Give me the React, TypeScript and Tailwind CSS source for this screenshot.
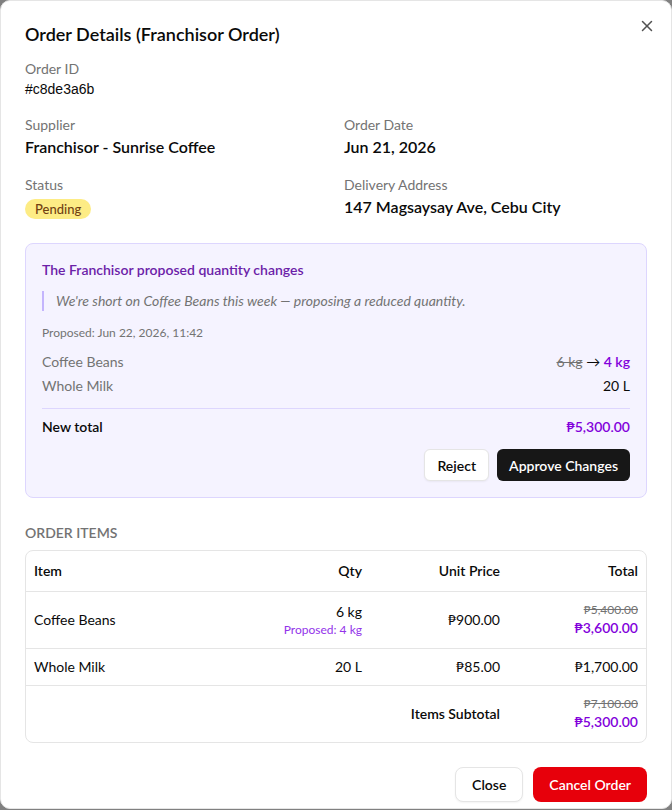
import React from "react";
import { X } from "lucide-react";

const font = { fontFamily: "Lato, 'Noto Sans', sans-serif" };

const Field = ({ label, children }: { label: string; children: React.ReactNode }) => (
  <div className="flex flex-col">
    <div className="text-[14px] leading-5 text-[#737373]">{label}</div>
    {children}
  </div>
);

const cols = "grid grid-cols-[1fr_120px_138px_138px] items-center px-2";

export default function App() {
  return (
    <div className="h-[810px] bg-[#808080]" style={font}>
      <div className="relative h-[809px] rounded-[10px] border border-[#e5e5e5] bg-white px-6 pt-[22px] text-[#0a0a0a]">
        <button className="absolute right-[15px] top-[16px] text-[#525252]">
          <X size={18} strokeWidth={2} />
        </button>
        <h2 className="text-[18px] font-semibold leading-[22px]">Order Details (Franchisor Order)</h2>

        <div className="mt-[14px] flex flex-col">
          <div className="text-[14px] leading-5 text-[#737373]">Order ID</div>
          <div className="text-[14px] leading-5" style={{ fontFamily: "'Liberation Sans', sans-serif" }}>
            #c8de3a6b
          </div>
        </div>

        <div className="mt-[16px] grid grid-cols-2 gap-x-4 gap-y-[16px]">
          <Field label="Supplier">
            <div className="text-[16px] font-semibold leading-6">Franchisor - Sunrise Coffee</div>
          </Field>
          <Field label="Order Date">
            <div className="text-[16px] font-semibold leading-6">Jun 21, 2026</div>
          </Field>
          <Field label="Status">
            <div className="flex pt-[4px]">
              <span className="rounded-full bg-[#fdec85] px-[10px] py-[2px] text-[13px] leading-4 font-medium text-[#713f12]">
                Pending
              </span>
            </div>
          </Field>
          <Field label="Delivery Address">
            <div className="text-[16px] font-semibold leading-6">147 Magsaysay Ave, Cebu City</div>
          </Field>
        </div>

        <div className="mt-[24px] rounded-lg border border-[#ddd6fe] bg-[#f5f3ff] px-4 pt-[16px] pb-[16px]">
          <div className="text-[14px] font-semibold leading-5 text-[#6b21a8]">
            The Franchisor proposed quantity changes
          </div>
          <div className="mt-[11px] border-l-2 border-[#c4b5fd] pl-3 text-[14px] italic leading-5 text-[#737373]">
            We're short on Coffee Beans this week — proposing a reduced quantity.
          </div>
          <div className="mt-[14px] text-[12px] leading-4 text-[#737373]">Proposed: Jun 22, 2026, 11:42</div>
          <div className="mt-[11px] flex flex-col gap-1 text-[14px] leading-5">
            <div className="flex justify-between">
              <span className="text-[#737373]">Coffee Beans</span>
              <span>
                <span className="text-[#737373] line-through">6 kg</span>
                <span className="text-[#0a0a0a]"> → </span>
                <span className="font-semibold text-[#8200db]">4 kg</span>
              </span>
            </div>
            <div className="flex justify-between">
              <span className="text-[#737373]">Whole Milk</span>
              <span>20 L</span>
            </div>
          </div>
          <div className="mt-[12px] flex justify-between border-t border-[#ddd6fe] pt-[8px] text-[14px] leading-5">
            <span className="font-semibold">New total</span>
            <span className="font-semibold text-[#8200db]">₱5,300.00</span>
          </div>
          <div className="mt-[12px] flex justify-end gap-2">
            <button className="h-8 rounded-md border border-[#e5e5e5] bg-white px-3 text-[14px] font-semibold shadow-xs">
              Reject
            </button>
            <button className="h-8 rounded-md bg-[#171717] px-3 text-[14px] font-semibold text-white">
              Approve Changes
            </button>
          </div>
        </div>

        <div className="mt-[25px] text-[14px] font-semibold uppercase leading-5 text-[#737373]">Order Items</div>

        <div className="mt-[7px] overflow-hidden rounded-lg border border-[#e5e5e5] text-[14px] leading-5">
          <div className={`${cols} h-[41px] border-b border-[#e5e5e5] font-semibold`}>
            <div>Item</div>
            <div className="text-right">Qty</div>
            <div className="text-right">Unit Price</div>
            <div className="text-right">Total</div>
          </div>
          <div className={`${cols} h-[57px] border-b border-[#e5e5e5]`}>
            <div>Coffee Beans</div>
            <div className="text-right">
              <div>6 kg</div>
              <div className="text-[12px] leading-4 text-[#9333ea]">Proposed: 4 kg</div>
            </div>
            <div className="text-right">₱900.00</div>
            <div className="text-right">
              <div className="text-[12px] leading-4 text-[#737373] line-through">₱5,400.00</div>
              <div className="font-semibold text-[#8200db]">₱3,600.00</div>
            </div>
          </div>
          <div className={`${cols} h-[37px] border-b border-[#e5e5e5]`}>
            <div>Whole Milk</div>
            <div className="text-right">20 L</div>
            <div className="text-right">₱85.00</div>
            <div className="text-right">₱1,700.00</div>
          </div>
          <div className={`${cols} h-[56px]`}>
            <div />
            <div />
            <div className="text-right font-semibold">Items Subtotal</div>
            <div className="text-right">
              <div className="text-[12px] leading-4 text-[#737373] line-through">₱7,100.00</div>
              <div className="font-semibold text-[#8200db]">₱5,300.00</div>
            </div>
          </div>
        </div>

        <div className="mt-[24px] flex justify-end gap-[10px]">
          <button className="h-[35px] rounded-lg border border-[#e5e5e5] bg-white px-4 text-[14px] font-semibold shadow-xs">
            Close
          </button>
          <button className="h-[35px] rounded-lg bg-[#e7000b] px-4 text-[14px] font-semibold text-white">
            Cancel Order
          </button>
        </div>
      </div>
    </div>
  );
}
